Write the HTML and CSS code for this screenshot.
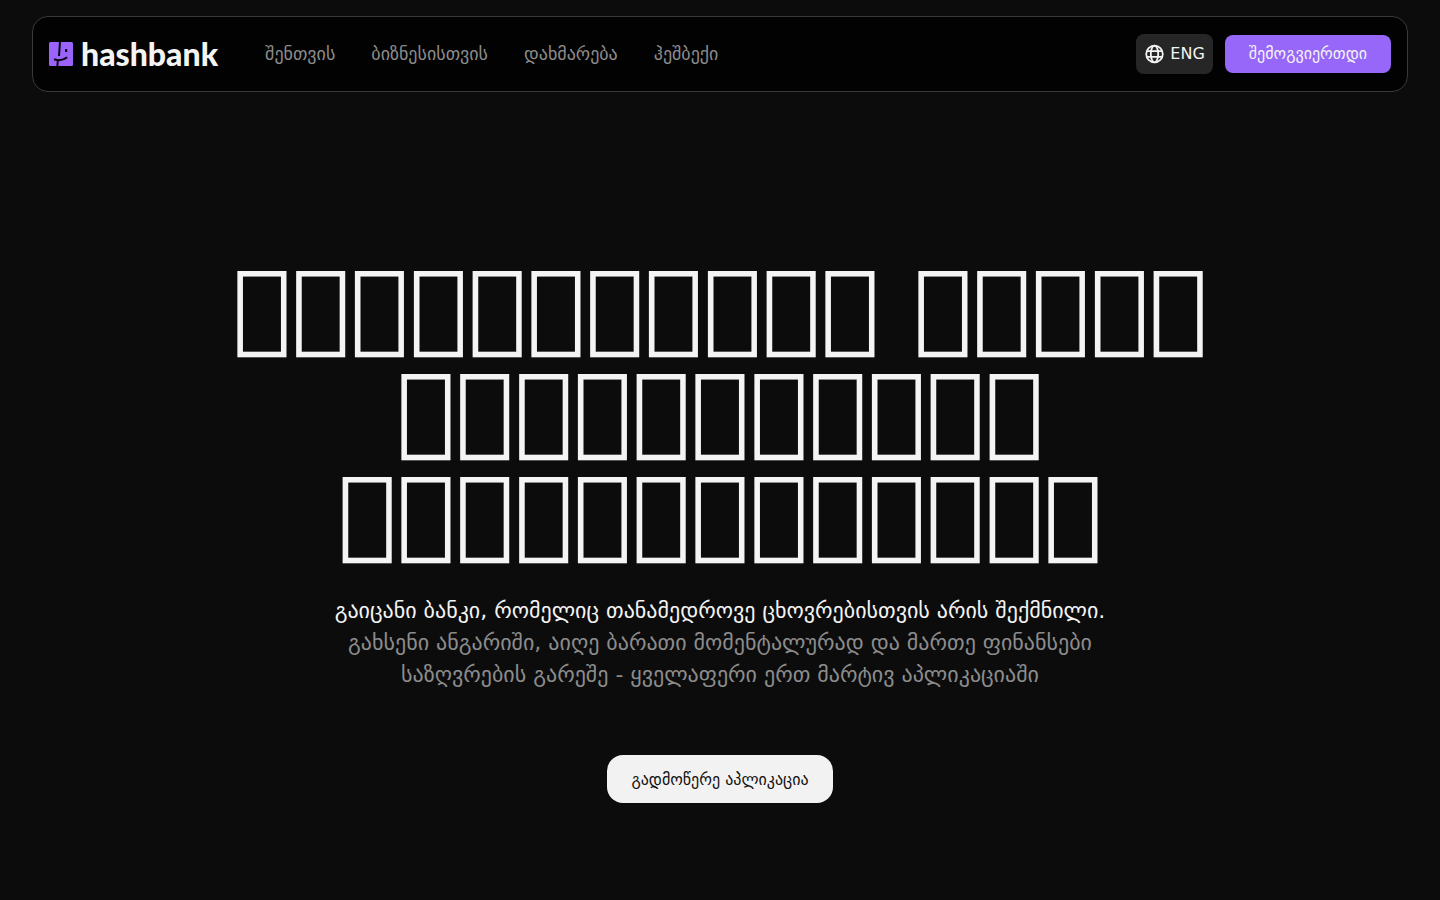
FILE: index.html
```html
<!DOCTYPE html>
<html lang="ka">
<head>
<meta charset="utf-8">
<meta name="viewport" content="width=device-width, initial-scale=1">
<title>hashbank</title>
<link rel="stylesheet" href="styles.css">
</head>
<body>
<header class="header">
  <a class="logo" href="#">
    <svg class="logo-mark" viewBox="0 0 24 24" aria-hidden="true">
      <rect width="24" height="24" rx="1.500" fill="#9b63fb"/>
      <path d="M11 0 10 14M8.800 18.200 8.400 24M5 17.200c4 1.400 9.500 1 13.200-1.900" fill="none" stroke="#080510" stroke-width="2"/>
      <rect x="16" y="7" width="2.200" height="3" rx=".5" fill="#080510"/>
    </svg>
    <span class="logo-name">hashbank</span>
  </a>
  <nav class="nav">
    <a href="#">შენთვის</a>
    <a href="#">ბიზნესისთვის</a>
    <a href="#">დახმარება</a>
    <a href="#">ჰეშბექი</a>
  </nav>
  <div class="actions">
    <button class="language" type="button">
      <svg class="globe" viewBox="0 0 20 20" fill="none" stroke="currentColor" stroke-width="1.800" aria-hidden="true">
        <circle cx="10.500" cy="10" r="8.300"/>
        <ellipse cx="10.500" cy="10" rx="3.700" ry="8.300"/>
        <path d="M2.800 7.200h15.400M2.800 12.800h15.400"/>
      </svg>
      <span class="language-name">ENG</span>
    </button>
    <button class="join" type="button">შემოგვიერთდი</button>
  </div>
</header>
<main class="hero">
  <h1 class="title">&#xE900;&#xE900;&#xE900;&#xE900;&#xE900;&#xE900;&#xE900;&#xE900;&#xE900;&#xE900;&#xE900; &#xE900;&#xE900;&#xE900;&#xE900;&#xE900; &#xE900;&#xE900;&#xE900;&#xE900;&#xE900;&#xE900;&#xE900;&#xE900;&#xE900;&#xE900;&#xE900; &#xE900;&#xE900;&#xE900;&#xE900;&#xE900;&#xE900;&#xE900;&#xE900;&#xE900;&#xE900;&#xE900;&#xE900;&#xE900;</h1>
  <p class="lead"><span class="lead-strong">გაიცანი ბანკი, რომელიც თანამედროვე ცხოვრებისთვის არის შექმნილი.</span> გახსენი ანგარიში, აიღე ბარათი მომენტალურად და მართე ფინანსები საზღვრების გარეშე - ყველაფერი ერთ მარტივ აპლიკაციაში</p>
  <button class="download" type="button">გადმოწერე აპლიკაცია</button>
</main>
</body>
</html>
```
FILE: styles.css
```css
* {
  box-sizing: border-box;
}

body {
  margin: 0;
  min-height: 100vh;
  padding: 16px 32px 0;
  background: #0c0c0c;
  color: #f4f4f4;
  font-family: "DejaVu Sans", sans-serif;
  font-size: 16px;
}

a {
  color: inherit;
  text-decoration: none;
}

button {
  border: 0;
  font: inherit;
  cursor: pointer;
}

.header {
  display: flex;
  align-items: center;
  height: 76px;
  padding: 0 16px;
  border: 1px solid #3a3a3a;
  border-radius: 16px;
  background: #020202;
}

.logo {
  display: flex;
  align-items: center;
  gap: 8px;
}

.logo-mark {
  width: 24px;
  height: 24px;
}

.logo-name {
  font-family: Lato, sans-serif;
  font-size: 32px;
  font-weight: 900;
  line-height: 32px;
}

.nav {
  display: flex;
  gap: 36px;
  margin-left: 47px;
  padding-bottom: 2px;
  color: #8c8c8c;
  font-size: 18px;
}

.actions {
  display: flex;
  align-items: center;
  gap: 12px;
  margin-left: auto;
}

.language {
  display: flex;
  align-items: center;
  gap: 6px;
  height: 40px;
  padding: 0 8px;
  border-radius: 8px;
  background: #262626;
  color: #f4f4f4;
}

.language-name {
  padding-bottom: 2px;
}

.globe {
  width: 20px;
  height: 20px;
}

.join {
  height: 38px;
  padding: 0 24px 2px;
  border-radius: 8px;
  background: #9667f8;
  color: #f4f4f4;
}

.hero {
  display: flex;
  flex-direction: column;
  align-items: center;
  padding: 163px 0 90px;
  text-align: center;
}

.title {
  max-width: 1040px;
  margin: 0;
  font-size: 98px;
  font-weight: 700;
  line-height: 103px;
}

.lead {
  max-width: 800px;
  margin: 31px 0 0;
  color: #8c8c8c;
  font-size: 22px;
  line-height: 32px;
}

.lead-strong {
  color: #f4f4f4;
}

.download {
  height: 48px;
  margin-top: 64px;
  padding: 0 24px;
  border-radius: 16px;
  background: #f2f2f2;
  color: #111;
}
```
